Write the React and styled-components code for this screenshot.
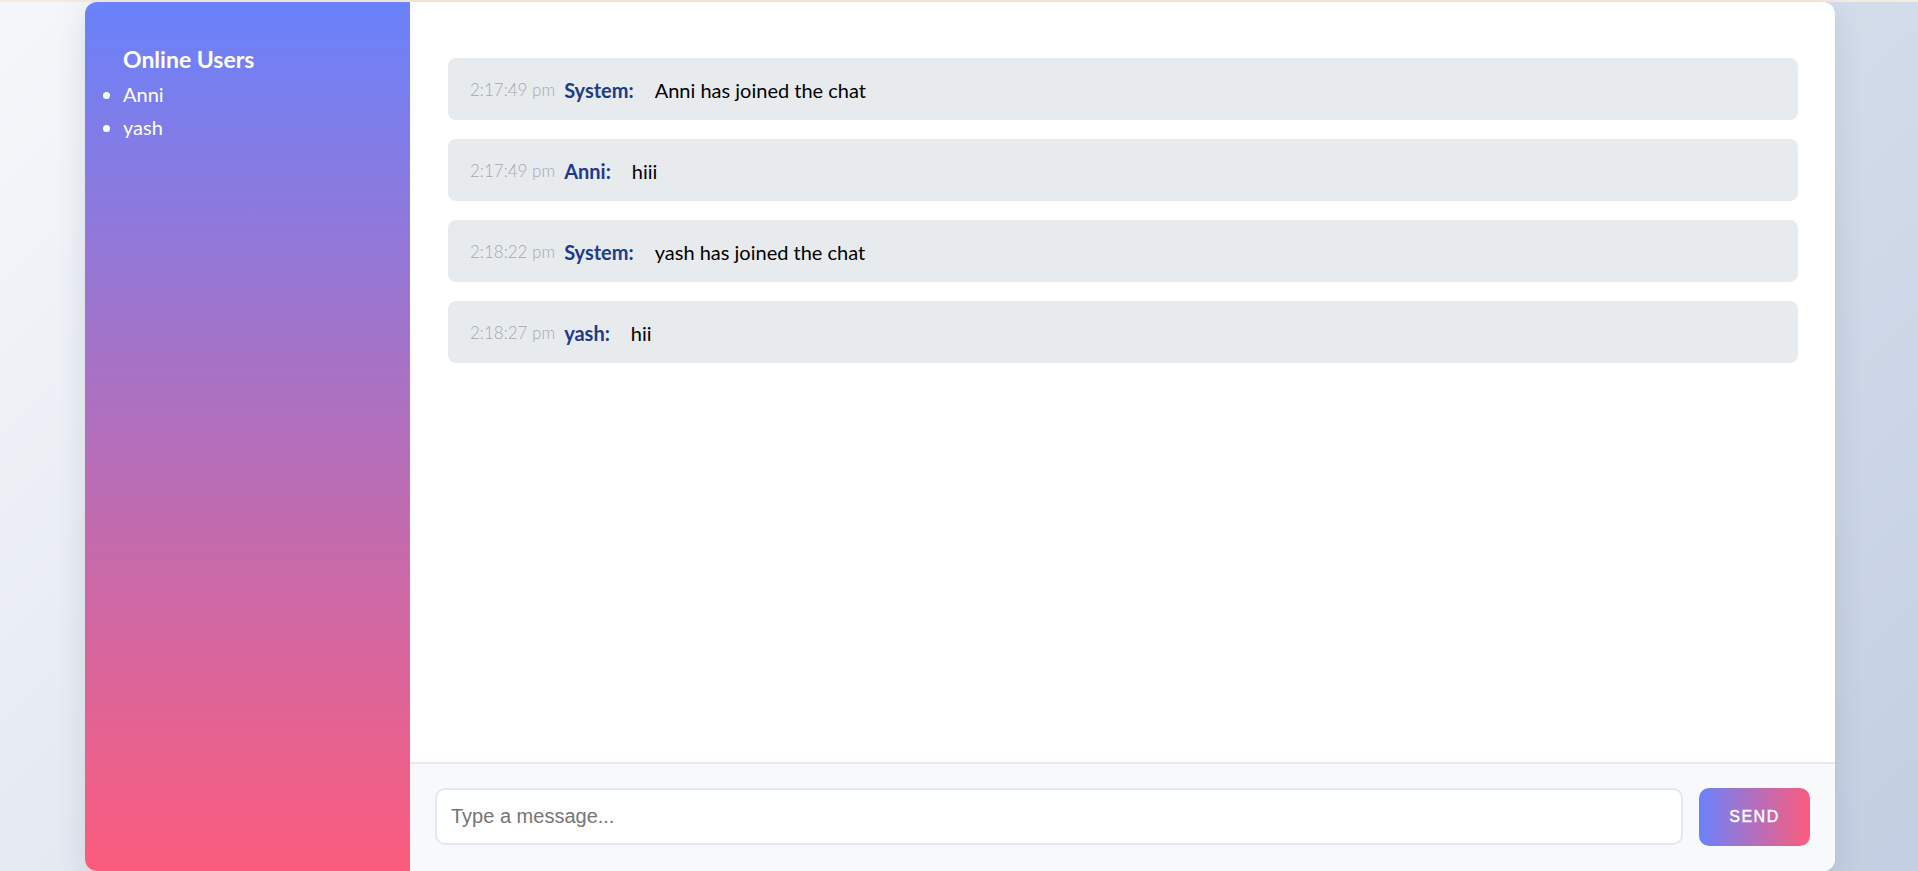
import React from "react";
import styled, { createGlobalStyle } from "styled-components";

const GlobalStyle = createGlobalStyle`
  html, body {
    margin: 0;
    padding: 0;
  }
  body {
    min-height: 100vh;
    background: linear-gradient(135deg, #f5f7fa 0%, #c3cfe2 100%);
    font-family: "Lato", "Open Sans", sans-serif;
    overflow: hidden;
  }
  * { box-sizing: border-box; }
`;

const Page = styled.div`
  height: 100vh;
  border-top: 2px solid #f6e9de;
  padding-left: 2px;
  display: flex;
  justify-content: center;
`;

const Card = styled.div`
  width: 1750px;
  height: 869px;
  display: flex;
  background: #ffffff;
  border-radius: 12px;
  overflow: hidden;
  box-shadow: 0 10px 30px rgba(60, 72, 100, 0.14);
`;

const Sidebar = styled.aside`
  width: 325px;
  flex: none;
  background: linear-gradient(to bottom, #6a82fb 0%, #fc5c7d 100%);
  color: #ffffff;
  padding: 42px 0 0 38px;
`;

const SidebarTitle = styled.h3`
  margin: 0 0 4px 0;
  font-size: 23px;
  font-weight: 700;
  line-height: 30px;
`;

const UserList = styled.ul`
  margin: 0;
  padding: 0;
  list-style: disc outside;
`;

const UserItem = styled.li`
  font-size: 20px;
  line-height: 33px;
`;

const Main = styled.main`
  flex: 1;
  display: flex;
  flex-direction: column;
  min-width: 0;
`;

const Messages = styled.div`
  flex: 1;
  padding: 56px 37px 0 38px;
  display: flex;
  flex-direction: column;
  gap: 19px;
`;

const MessageRow = styled.div`
  height: 62px;
  background: #e8ebee;
  border-radius: 8px;
  display: flex;
  align-items: center;
  padding: 1px 22px 0 22px;
`;

const Time = styled.span`
  font-size: 17px;
  font-weight: 300;
  color: #a5a9af;
  margin-right: 9px;
`;

const Sender = styled.span`
  font-size: 20px;
  font-weight: 700;
  color: #1e3a8a;
  margin-right: 21px;
`;

const Body = styled.span`
  font-size: 20px;
  color: #000000;
`;

const Composer = styled.form`
  flex: none;
  border-top: 2px solid #e6e9ef;
  background: #f8f9fb;
  padding: 24px 25px 25px 25px;
  display: flex;
  gap: 16px;
`;

const MessageInput = styled.input`
  flex: 1;
  height: 57px;
  border: 2px solid #e2e8f0;
  border-radius: 10px;
  background: #ffffff;
  padding: 0 14px;
  font-family: "Liberation Sans", Arial, sans-serif;
  font-size: 20px;
  color: #222;
  outline: none;
  &::placeholder {
    color: #757575;
  }
`;

const SendButton = styled.button`
  width: 111px;
  height: 58px;
  border: none;
  border-radius: 10px;
  background: linear-gradient(to right, #6a82fb 0%, #fc5c7d 100%);
  color: #ffffff;
  font-family: "Liberation Sans", Arial, sans-serif;
  font-size: 16px;
  font-weight: 400;
  -webkit-text-stroke: 0.4px #ffffff;
  letter-spacing: 1.5px;
  text-transform: uppercase;
  cursor: pointer;
`;

const users = ["Anni", "yash"];

const messages = [
  { time: "2:17:49 pm", sender: "System", text: "Anni has joined the chat" },
  { time: "2:17:49 pm", sender: "Anni", text: "hiii" },
  { time: "2:18:22 pm", sender: "System", text: "yash has joined the chat" },
  { time: "2:18:27 pm", sender: "yash", text: "hii" },
];

export default function App() {
  return (
    <>
      <GlobalStyle />
      <Page>
        <Card>
          <Sidebar>
            <SidebarTitle>Online Users</SidebarTitle>
            <UserList>
              {users.map((u) => (
                <UserItem key={u}>{u}</UserItem>
              ))}
            </UserList>
          </Sidebar>
          <Main>
            <Messages>
              {messages.map((m, i) => (
                <MessageRow key={i}>
                  <Time>{m.time}</Time>
                  <Sender>{m.sender}:</Sender>
                  <Body>{m.text}</Body>
                </MessageRow>
              ))}
            </Messages>
            <Composer onSubmit={(e) => e.preventDefault()}>
              <MessageInput placeholder="Type a message..." />
              <SendButton type="submit">Send</SendButton>
            </Composer>
          </Main>
        </Card>
      </Page>
    </>
  );
}
